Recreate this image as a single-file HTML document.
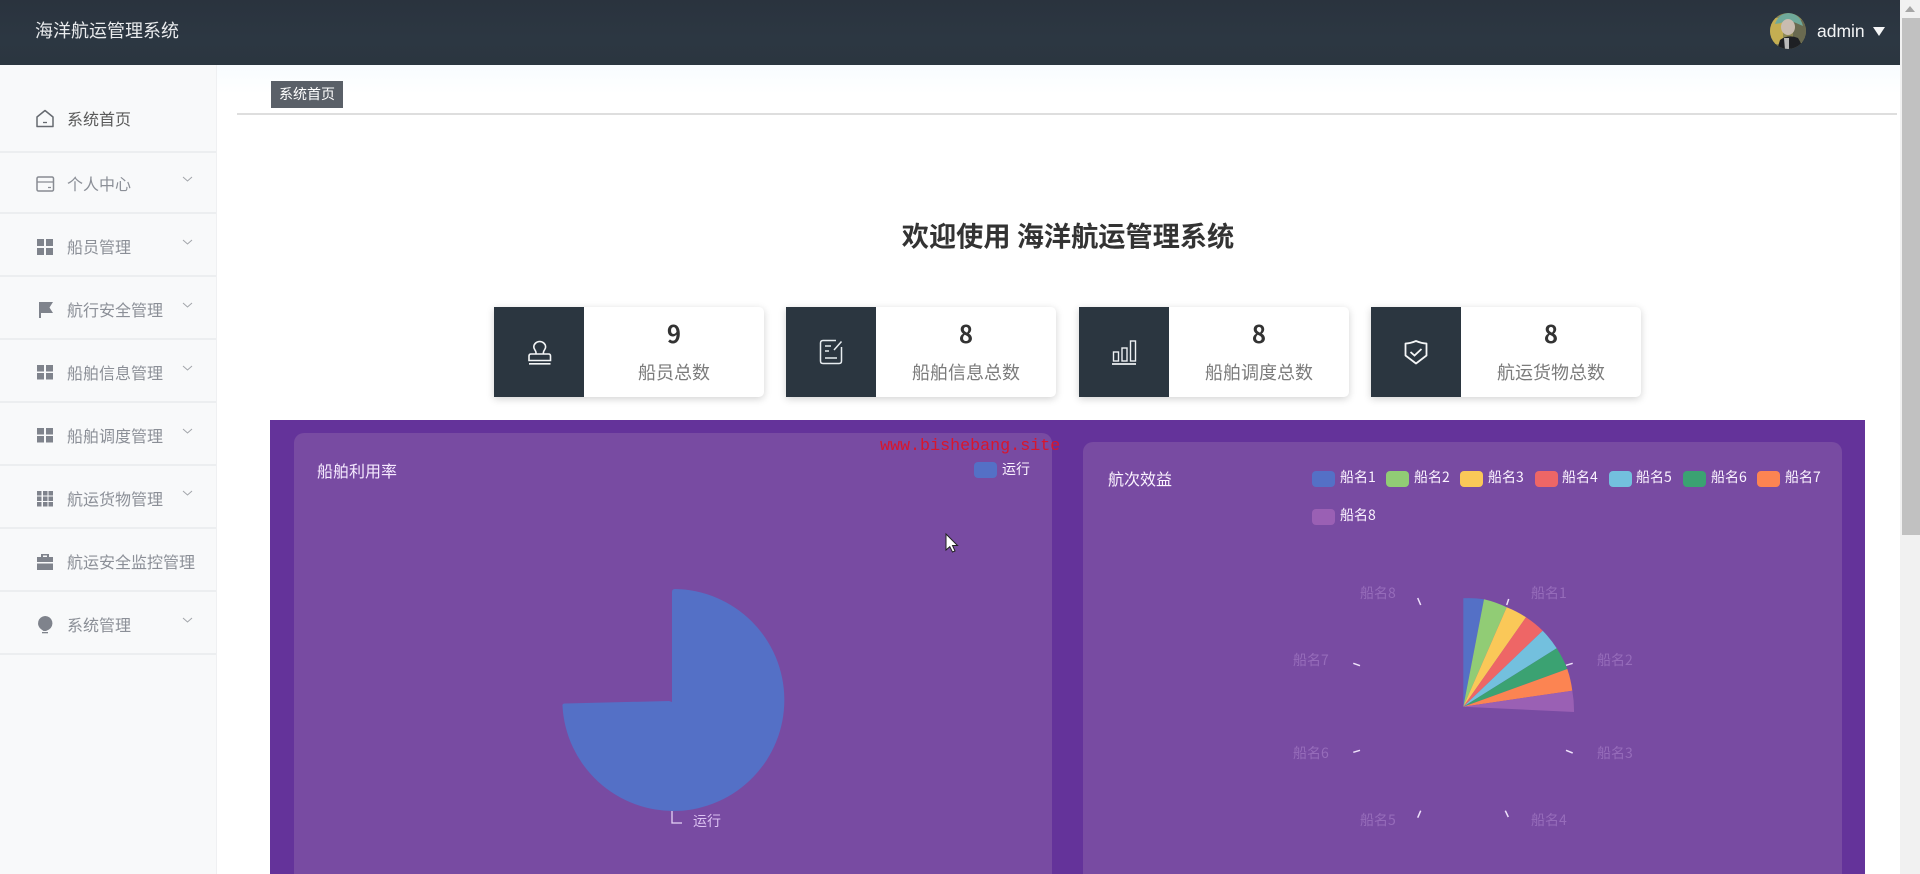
<!DOCTYPE html>
<html lang="zh-CN">
<head>
<meta charset="utf-8">
<title>海洋航运管理系统</title>
<style>
html,body{margin:0;padding:0;width:1920px;height:874px;overflow:hidden;background:#fff;}
body{position:relative;font-family:"Liberation Sans","Noto Sans CJK SC",sans-serif;}
.abs{position:absolute;}
.t{position:absolute;white-space:nowrap;line-height:24px;height:24px;}
.cn{font-family:"Noto Sans CJK SC","Liberation Sans",sans-serif;}
#hdr{left:0;top:0;width:1900px;height:65px;background:linear-gradient(#2a333e,#2c3742 60%,#2b3640);}
#top{left:217px;top:65px;width:1683px;height:48px;background:linear-gradient(#f8fcff,#fff 60%);}
#side{left:0;top:65px;width:217px;height:809px;background:#f8f9fa;border-right:1px solid #eff0f2;box-sizing:border-box;}
.sep{position:absolute;left:0;width:216px;height:2px;background:#eceef0;}
.mi{font-size:16px;color:#8b8f97;left:67px;}
.card{position:absolute;top:307px;width:270px;height:90px;background:#fff;border-radius:0 5px 5px 0;box-shadow:0 2px 8px rgba(0,0,0,.18);}
.card .d{position:absolute;left:0;top:0;width:90px;height:90px;background:#2b3640;}
.card .n{position:absolute;left:90px;width:180px;top:8px;text-align:center;font-size:24px;font-weight:700;line-height:36px;color:#333;font-family:"Noto Sans CJK SC",sans-serif;}
.card .l{position:absolute;left:90px;width:180px;top:52px;text-align:center;font-size:18px;line-height:26px;color:#7b7b7b;font-family:"Noto Sans CJK SC",sans-serif;}
.card svg{position:absolute;left:30px;top:30px;}
.sw{position:absolute;width:23px;height:16px;border-radius:4px;}
.lg{font-size:14px;color:#fbf3ff;}
.pl{font-size:14px;color:#966cba;}
svg{display:block;}
</style>
</head>
<body>
<div class="abs" id="top"></div>
<div class="abs" id="hdr"></div>
<div class="t cn" style="left:35px;top:18px;font-size:18px;color:#e9ebed;">海洋航运管理系统</div>

<svg class="abs" style="left:1769px;top:12px;" width="38" height="38" viewBox="0 0 38 38">
<defs><clipPath id="av"><circle cx="19" cy="19" r="18"/></clipPath></defs>
<g clip-path="url(#av)">
<rect width="38" height="38" fill="#8f8a55"/>
<rect x="0" y="6" width="14" height="26" fill="#c4ae52"/>
<rect x="24" y="8" width="14" height="22" fill="#6a6a50"/>
<path d="M6 12Q10 1 20 1Q31 2 34 14L27 11Q18 7 12 11Z" fill="#6fa99a"/>
<ellipse cx="19" cy="15" rx="7" ry="8" fill="#c9bcb0"/>
<path d="M8 38L11 28Q19 22 29 26L36 38Z" fill="#1e2024"/>
<path d="M15 26L20 26L20 38L16 38Z" fill="#b9b9b9"/>
</g>
</svg>
<div class="t" style="left:1817px;top:19px;font-size:17.5px;color:#f2f4f5;">admin</div>
<svg class="abs" style="left:1873px;top:27px;" width="12" height="9"><path d="M0 0H12L6 9Z" fill="#f5f6f7"/></svg>

<!-- scrollbar -->
<div class="abs" style="left:1900px;top:0;width:20px;height:874px;background:#f1f1f1;"></div>
<svg class="abs" style="left:1904px;top:5px;" width="12" height="8"><path d="M1 7L6 1L11 7Z" fill="#a6a6a6"/></svg>
<div class="abs" style="left:1902px;top:18px;width:18px;height:517px;background:#c1c1c1;"></div>

<!-- sidebar -->
<div class="abs" id="side"></div>
<div class="sep" style="top:151px"></div>
<div class="sep" style="top:212px"></div>
<div class="sep" style="top:275px"></div>
<div class="sep" style="top:338px"></div>
<div class="sep" style="top:401px"></div>
<div class="sep" style="top:464px"></div>
<div class="sep" style="top:527px"></div>
<div class="sep" style="top:590px"></div>
<div class="sep" style="top:653px"></div>

<div class="t cn mi" style="top:106px;color:#5a5a5a;">系统首页</div>
<div class="t cn mi" style="top:171px;">个人中心</div>
<div class="t cn mi" style="top:234px;">船员管理</div>
<div class="t cn mi" style="top:297px;">航行安全管理</div>
<div class="t cn mi" style="top:360px;">船舶信息管理</div>
<div class="t cn mi" style="top:423px;">船舶调度管理</div>
<div class="t cn mi" style="top:486px;">航运货物管理</div>
<div class="t cn mi" style="top:549px;">航运安全监控管理</div>
<div class="t cn mi" style="top:612px;">系统管理</div>

<svg class="abs" style="left:0;top:65px;" width="217" height="640" viewBox="0 65 217 640">
<!-- home -->
<path d="M37 117L45 110.500L53 117V126.500H37Z" fill="none" stroke="#666a70" stroke-width="1.500" stroke-linejoin="round"/>
<path d="M43 122.500H47" stroke="#666a70" stroke-width="1.300"/>
<!-- card -->
<rect x="37" y="177" width="16.500" height="14" rx="1.500" fill="none" stroke="#878b92" stroke-width="1.500"/>
<path d="M37 182H53M48 187.500H51" stroke="#878b92" stroke-width="1.300"/>
<!-- grid -->
<g fill="#7f838c">
<rect x="37" y="239" width="7" height="7"/><rect x="46" y="239" width="7" height="7"/>
<rect x="37" y="248" width="7" height="7"/><rect x="46" y="248" width="7" height="7"/>
<rect x="37" y="365" width="7" height="6.500"/><rect x="46" y="365" width="7" height="6.500"/>
<rect x="37" y="373" width="7" height="6.500"/><rect x="46" y="373" width="7" height="6.500"/>
<rect x="37" y="428" width="7" height="6.500"/><rect x="46" y="428" width="7" height="6.500"/>
<rect x="37" y="436" width="7" height="6.500"/><rect x="46" y="436" width="7" height="6.500"/>
<!-- 3x3 -->
<rect x="37" y="491" width="4.500" height="4.500"/><rect x="43" y="491" width="4.500" height="4.500"/><rect x="48.500" y="491" width="4.500" height="4.500"/>
<rect x="37" y="496.500" width="4.500" height="4.500"/><rect x="43" y="496.500" width="4.500" height="4.500"/><rect x="48.500" y="496.500" width="4.500" height="4.500"/>
<rect x="37" y="502" width="4.500" height="4.500"/><rect x="43" y="502" width="4.500" height="4.500"/><rect x="48.500" y="502" width="4.500" height="4.500"/>
<!-- flag -->
<path d="M39 302H53L49.500 307.500L53 313H41V318H39Z"/>
<!-- briefcase -->
<path d="M41 557V554H49V557H53V562H37V557ZM43 557H47V555.500H43ZM37 563.500H53V570H37Z"/>
<!-- bulb -->
<path d="M45 616A7.300 7.300 0 0 1 49 629.500L46 631H43.500L41.500 629.500A7.300 7.300 0 0 1 45 616Z"/>
<rect x="42" y="632" width="6" height="1.300"/>
</g>
<g fill="none" stroke="#a2a5aa" stroke-width="1">
<path d="M183 177L187.500 181L192 177"/>
<path d="M183 240L187.500 244L192 240"/>
<path d="M183 303L187.500 307L192 303"/>
<path d="M183 366L187.500 370L192 366"/>
<path d="M183 429L187.500 433L192 429"/>
<path d="M183 491L187.500 495L192 491"/>
<path d="M183 618L187.500 622L192 618"/>
</g>
</svg>

<!-- breadcrumb -->
<div class="abs cn" style="left:271px;top:81px;width:72px;height:27px;background:#5a6068;color:#fff;font-size:14px;line-height:27px;text-align:center;">系统首页</div>
<div class="abs" style="left:237px;top:113px;width:1660px;height:2px;background:#dedede;"></div>

<!-- title -->
<div class="abs cn" style="left:237px;width:1662px;top:214px;text-align:center;font-size:27.200px;line-height:40px;font-weight:700;color:#333;white-space:nowrap;">欢迎使用 海洋航运管理系统</div>

<!-- cards -->
<div class="card" style="left:494px;"><div class="d"><svg width="30" height="30" viewBox="0 0 30 30" fill="none" stroke="#f4f6f7" stroke-width="1.600">
<path d="M12 17V15.500C12 13.500 9.800 12.500 9.800 10A5.900 5.500 0 0 1 21.600 10C21.600 12.500 19.400 13.500 19.400 15.500V17"/>
<path d="M5 23.500V19Q5 17 7 17H24.500Q26.500 17 26.500 19V23.500Z"/><path d="M5 26.800H26.500"/></svg></div><div class="n">9</div><div class="l">船员总数</div></div>

<div class="card" style="left:786px;"><div class="d"><svg width="30" height="30" viewBox="0 0 30 30" fill="none" stroke="#e8edf0" stroke-width="1.500">
<path d="M25.500 10V24Q25.500 26.500 23 26.500H7Q4.500 26.500 4.500 24V6Q4.500 3.500 7 3.500H20"/>
<path d="M18 13L25.500 4.500"/><path d="M9 9H15M9 14H13M9 21H21"/></svg></div><div class="n">8</div><div class="l">船舶信息总数</div></div>

<div class="card" style="left:1079px;"><div class="d"><svg width="30" height="30" viewBox="0 0 30 30" fill="none" stroke="#eef1f3" stroke-width="1.400">
<rect x="4.500" y="15" width="5" height="9"/><rect x="13" y="11" width="5" height="13"/><rect x="21.500" y="4" width="5" height="20"/><path d="M3 27H27" stroke-width="1.800"/></svg></div><div class="n">8</div><div class="l">船舶调度总数</div></div>

<div class="card" style="left:1371px;"><div class="d"><svg width="30" height="30" viewBox="0 0 30 30" fill="none" stroke="#f4f6f7" stroke-width="1.800">
<path d="M15 4Q21 6.500 25.500 6.500V18.500L15 26.500L4.500 18.500V6.500Q9 6.500 15 4Z" stroke-linejoin="round"/><path d="M9.500 15L13.500 18.500L20.500 12"/></svg></div><div class="n">8</div><div class="l">航运货物总数</div></div>

<!-- purple area -->
<div class="abs" style="left:270px;top:420px;width:1595px;height:454px;background:#64339a;"></div>
<div class="abs" style="left:294px;top:433px;width:758px;height:441px;background:#784ba2;border-radius:10px 10px 0 0;"></div>
<div class="abs" style="left:1083px;top:442px;width:759px;height:432px;background:#784ba2;border-radius:10px 10px 0 0;"></div>

<div class="t cn" style="left:317px;top:458px;font-size:16px;color:#f6eaff;">船舶利用率</div>
<div class="sw" style="left:974px;top:462px;background:#5470c6;"></div>
<div class="t cn lg" style="left:1002px;top:457px;">运行</div>
<div class="t cn" style="left:693px;top:809px;font-size:14px;color:#dcc2f2;">运行</div>

<div class="t cn" style="left:1108px;top:466px;font-size:16px;color:#fbf3ff;">航次效益</div>
<div class="sw" style="left:1312px;top:471px;background:#5470c6;"></div>
<div class="t cn lg" style="left:1340px;top:465px;">船名1</div>
<div class="sw" style="left:1386px;top:471px;background:#91cc75;"></div>
<div class="t cn lg" style="left:1414px;top:465px;">船名2</div>
<div class="sw" style="left:1460px;top:471px;background:#fac858;"></div>
<div class="t cn lg" style="left:1488px;top:465px;">船名3</div>
<div class="sw" style="left:1535px;top:471px;background:#ee6666;"></div>
<div class="t cn lg" style="left:1562px;top:465px;">船名4</div>
<div class="sw" style="left:1609px;top:471px;background:#73c0de;"></div>
<div class="t cn lg" style="left:1636px;top:465px;">船名5</div>
<div class="sw" style="left:1683px;top:471px;background:#3ba272;"></div>
<div class="t cn lg" style="left:1711px;top:465px;">船名6</div>
<div class="sw" style="left:1757px;top:471px;background:#fc8452;"></div>
<div class="t cn lg" style="left:1785px;top:465px;">船名7</div>
<div class="sw" style="left:1312px;top:509px;background:#9a60b4;"></div>
<div class="t cn lg" style="left:1340px;top:503px;">船名8</div>

<svg class="abs" style="left:0;top:0;" width="1900" height="874" viewBox="0 0 1900 874">
<!-- first pie -->
<path d="M672 702L672 592Q672 589 675 589A111 111 0 1 1 562.500 706Q562 703.500 565 703.500L669 701Z" fill="#5470c6"/>
<path d="M672 811V823H682" fill="none" stroke="#e4d2f6" stroke-width="1.300"/>
<!-- second pie -->
<path d="M1463.300 706.700L1463.300 598.300A108.400 108.400 0 0 1 1484 599.300Z" fill="#5470c6"/>
<path d="M1463.300 706.700L1484 599.300A108.600 108.600 0 0 1 1506.700 607.300Z" fill="#91cc75"/>
<path d="M1463.300 706.700L1506.700 607.300A109 109 0 0 1 1526 617.300Z" fill="#fac858"/>
<path d="M1463.300 706.700L1526 617.300A110 110 0 0 1 1542.700 630.700Z" fill="#ee6666"/>
<path d="M1463.300 706.700L1542.700 630.700A110 110 0 0 1 1556.700 648.300Z" fill="#73c0de"/>
<path d="M1463.300 706.700L1556.700 648.300A110.500 110.500 0 0 1 1567.300 669Z" fill="#3ba272"/>
<path d="M1463.300 706.700L1567.300 669A110.500 110.500 0 0 1 1572.300 690.700Z" fill="#fc8452"/>
<path d="M1463.300 706.700L1572.300 690.700A111 111 0 0 1 1574 712Z" fill="#9a60b4"/>
<g stroke="#efe2fb" stroke-width="1.500" fill="none">
<path d="M1506.700 605L1508.700 599"/>
<path d="M1566 665.300L1572.700 663.300"/>
<path d="M1566 750.300L1572.700 753"/>
<path d="M1505.300 810.700L1508.300 817"/>
<path d="M1417.700 817.700L1420.700 810.700"/>
<path d="M1353.300 752.300L1360 750.300"/>
<path d="M1353.300 663.300L1360 665.700"/>
<path d="M1417.700 598L1420.700 605"/>
</g>
<!-- cursor -->
<path d="M946 534V550L949.800 546.700L952.500 552L955 551L952.500 545.500H957.500Z" fill="#fff" stroke="#222" stroke-width="1"/>
</svg>

<div class="t cn pl" style="left:1531px;top:581px;">船名1</div>
<div class="t cn pl" style="left:1597px;top:648px;">船名2</div>
<div class="t cn pl" style="left:1597px;top:741px;">船名3</div>
<div class="t cn pl" style="left:1531px;top:808px;">船名4</div>
<div class="t cn pl" style="left:1360px;top:808px;">船名5</div>
<div class="t cn pl" style="left:1293px;top:741px;">船名6</div>
<div class="t cn pl" style="left:1293px;top:648px;">船名7</div>
<div class="t cn pl" style="left:1360px;top:581px;">船名8</div>

<!-- watermark -->
<div class="t" style="left:880px;top:435px;font-family:'Liberation Mono',monospace;font-size:16.700px;color:#d9152c;">www.bishebang.site</div>
</body>
</html>
